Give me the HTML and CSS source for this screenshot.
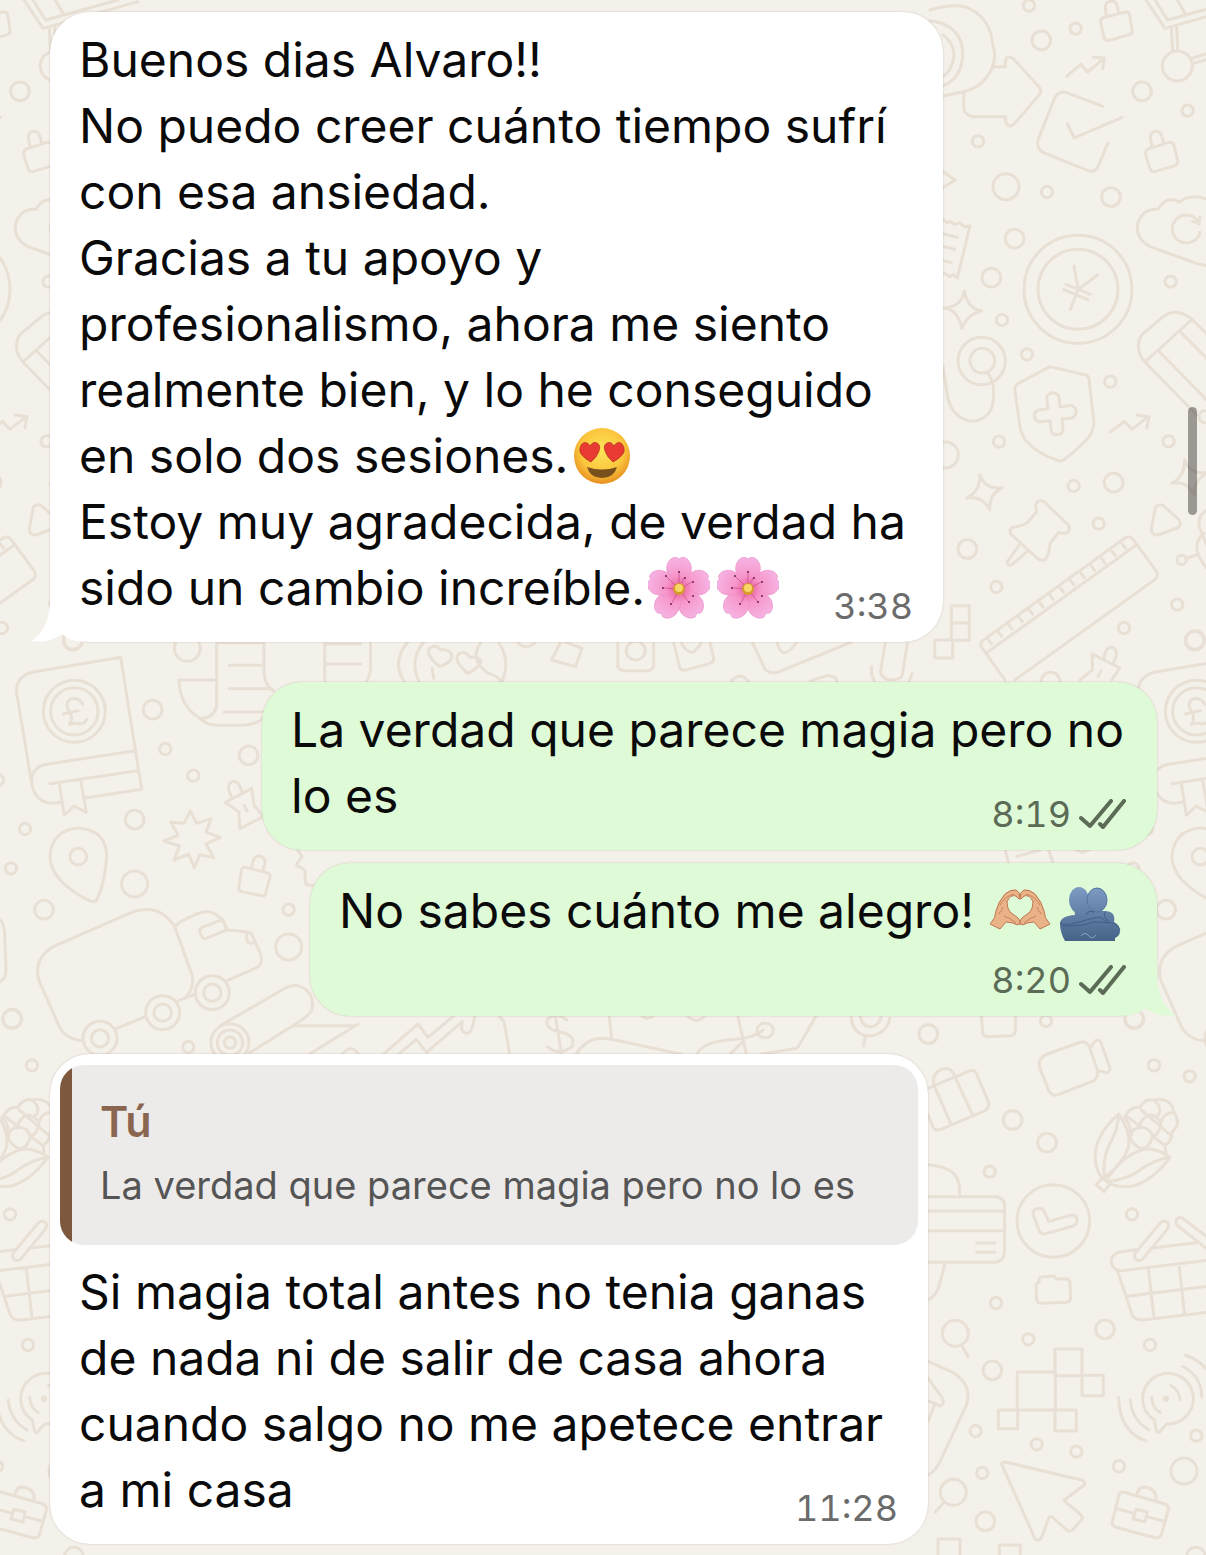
FILE: index.html
```
<!DOCTYPE html>
<html lang="es">

<head>
  <meta charset="UTF-8">
  <meta name="viewport" content="width=device-width, initial-scale=1.0">
  <title>Chat</title>
  <link rel="stylesheet" href="styles.css">
</head>

<body>
  <!-- Wallpaper: one set of doodles, repeated sideways every 1122px -->
  <svg class="wallpaper" aria-hidden="true">
    <g id="doodles">
      <g transform="translate(930 0) scale(.3333)">
        <circle cx="297" cy="17" r="17" /><circle cx="437" cy="86" r="17" /><circle cx="334" cy="121" r="28" />
        <circle cx="636" cy="274" r="28" /><circle cx="773" cy="332" r="17" /><circle cx="144" cy="424" r="17" />
        <circle cx="228" cy="560" r="39" /><circle cx="351" cy="576" r="17" /><circle cx="543" cy="591" r="28" />
        <circle cx="254" cy="716" r="28" /><circle cx="184" cy="833" r="28" /><circle cx="722" cy="845" r="17" />
        <circle cx="216" cy="960" r="17" />
        <!-- padlocks -->
        <path d="M522 52L586 36Q596 34 599 44L606 90Q608 100 598 104L538 121Q526 124 522 112L512 68Q510 55 522 52ZM529 50L526 22Q526 4 545 4Q560 4 562 20L566 40" />
        <path d="M657 446L717 427Q728 425 732 436L743 483Q744 494 735 497L674 515Q664 516 660 506L647 464Q646 450 657 446ZM666 442L661 412Q663 394 680 394Q693 396 696 410L701 430" />
        <!-- cart -->
        <path d="M648 0L705 85L990 5M675 0L713 60L930 0M742 0L765 40M724 83L728 153M740 80L743 152M785 175L828 162M788 191L828 179" />
        <circle cx="742" cy="198" r="45" />
        <!-- camera and arrow -->
        <path d="M0 30Q70 10 110 22Q165 45 182 100L194 160Q196 210 155 248Q135 268 100 275L40 288M0 62Q100 75 98 165Q95 235 40 257M40 105Q72 130 72 165Q70 205 40 230" />
        <path d="M190 200L226 200L226 182Q232 164 250 176L328 262Q336 274 328 284L252 373Q234 386 227 366L227 350L130 350Q101 346 101 318L101 277" />
        <path d="M410 229L452 193L473 216L522 175M490 172L523 174L518 206" />
        <path d="M519 319L408 277Q384 272 374 294L324 420Q318 446 340 458L474 512Q494 518 504 500L533 431M412 371L433 414L577 352" />
        <path d="M40 515L76 540L40 562" />
        <!-- cloud -->
        <path d="M850 606Q790 575 748 606Q710 585 684 628Q640 625 624 668Q614 715 660 740L800 790Q815 795 850 800M810 697A42 42 0 1 1 803 662M810 652L807 671L788 664" />
        <!-- receipt, star -->
        <path d="M40 660L52 668L62 664L74 674L88 668L103 680L120 678L82 834L70 824L60 830L40 818M40 702L82 712M40 740L74 748M40 782L64 788" />
        <path d="M103 873Q112 925 155 933Q115 940 95 985Q85 930 43 924Q95 920 103 873Z" />
        <!-- yen coin -->
        <circle cx="444" cy="868" r="162" /><circle cx="444" cy="868" r="120" />
        <path d="M432 798L445 868L503 825M445 868L421 928M408 853L481 883M401 869L474 899" />
      </g>

      <g transform="translate(930 300) scale(.3333)">
        <circle cx="291" cy="163" r="17" /><circle cx="541" cy="245" r="17" /><circle cx="207" cy="425" r="17" />
        <circle cx="716" cy="424" r="17" /><circle cx="431" cy="558" r="17" /><circle cx="551" cy="548" r="28" />
        <circle cx="506" cy="671" r="17" /><circle cx="112" cy="747" r="28" /><circle cx="199" cy="861" r="17" />
        <circle cx="742" cy="914" r="17" /><circle cx="582" cy="984" r="17" /><circle cx="795" cy="1020" r="28" />
        <circle cx="46" cy="465" r="39" /><circle cx="155" cy="183" r="71" /><circle cx="157" cy="182" r="37" />
        <circle cx="362" cy="1145" r="28" />
        <path d="M40 200L52 290Q70 360 130 364Q200 355 190 260L186 245Q180 225 170 217" />
        <!-- shield -->
        <path d="M360 200L470 226Q477 230 477 238L491 360Q495 395 465 424Q435 455 400 481Q390 485 380 480Q330 465 290 425Q274 405 270 380L254 265Q254 258 262 252Z" />
        <path d="M350 292Q356 278 370 278Q386 280 387 292L390 321L420 316Q438 318 438 336Q436 352 424 354L396 357L399 388Q398 404 380 404Q366 404 364 392L360 362L330 365Q312 362 313 346Q314 332 326 330L354 326Z" />
        <path d="M541 396L584 364L605 388L655 350M622 345L657 350L651 383" />
        <path d="M150 524Q165 570 216 563Q175 585 180 630Q155 585 110 594Q150 575 150 524Z" />
        <path d="M764 480Q780 525 834 518Q790 540 793 585Q770 540 726 550Q764 530 764 480Z" />
        <!-- push pin -->
        <path d="M320 635Q312 602 332 602Q342 602 347 610L415 675Q422 690 412 698Q400 702 386 697L360 730Q358 765 346 778Q335 785 322 775L242 702Q236 690 248 682Q290 675 296 664ZM268 735L232 785Q232 798 246 794L294 752" />
        <!-- ruler -->
        <path d="M584 715Q600 704 612 722L680 815Q686 828 676 838L255 1140M584 715L158 1022Q148 1032 156 1044L225 1140M618 736L170 1058" />
        <path d="M174 1018l10 13m21 -35l10 13m21 -35l10 13m21 -35l10 13m21 -35l10 13m21 -35l10 13m21 -35l10 13m21 -35l10 13m21 -35l10 13m21 -35l10 13m21 -35l10 13m21 -35l10 13m21 -35l10 13m21 -35l10 13" />
        <path d="M676 622Q690 606 706 622L748 660Q756 675 742 684L684 705Q664 706 664 688Z" />
        <path d="M64 917h54v104h-54zM64 969h54M14 1020h54v54h-54z" />
        <path d="M545 1140L569 1104L487 1062L487 1110L450 1140M522 1078Q525 1040 548 1042Q570 1055 550 1088M514 1112L504 1130" />
        <!-- eraser -->
        <path d="M645 186Q618 155 628 120Q632 108 640 100L700 50Q740 20 785 57L850 122M645 186L784 60M645 186L800 345M686 153L850 320M750 95L850 195" />
        <circle cx="825" cy="350" r="18" /><circle cx="755" cy="780" r="14" />
        <path d="M840 625Q800 645 808 680L834 745M822 700Q775 740 830 804M770 775L798 765" />
      </g>

      <g transform="translate(0 630) scale(.3333)">
        <circle cx="218" cy="32" r="28" /><circle cx="562" cy="55" r="39" /><circle cx="458" cy="239" r="28" />
        <circle cx="496" cy="357" r="17" /><circle cx="580" cy="437" r="17" /><circle cx="746" cy="376" r="28" />
        <circle cx="75" cy="597" r="17" /><circle cx="404" cy="569" r="28" /><circle cx="33" cy="715" r="17" />
        <circle cx="235" cy="680" r="25" /><circle cx="404" cy="762" r="39" /><circle cx="132" cy="839" r="28" />
        <circle cx="866" cy="839" r="17" /><circle cx="866" cy="951" r="39" /><circle cx="37" cy="1166" r="28" />
        <circle cx="565" cy="1251" r="17" /><circle cx="-6" cy="450" r="17" />
        <!-- book -->
        <path d="M186 516L160 520Q105 520 95 460L50 190Q45 140 100 126L362 82L425 478L255 504M95 460Q90 410 145 402L405 362M150 461L412 422M178 461L193 556L222 528L259 547L242 450" />
        <circle cx="223" cy="244" r="93" /><circle cx="223" cy="244" r="71" />
        <path d="M248 222Q235 200 212 207Q193 220 206 240Q222 265 208 284Q225 276 240 282Q255 282 260 268M190 252L235 242" />
        <!-- map pin, burst, bell, padlock -->
        <path d="M235 594Q320 600 320 680Q315 750 295 800Q288 820 270 813Q220 790 180 750Q150 715 150 680Q155 600 235 594Z" />
        <path d="M571 543L590 580L633 566L618 607L662 622L618 642L641 683L600 674L583 713L566 673L522 690L539 648L492 633L535 616L512 577L552 580Z" />
        <path d="M676 517L755 475L762 525L790 560L720 596L716 545ZM695 500Q675 465 697 454Q715 450 726 485M733 527L741 543" />
        <path d="M735 712L800 728Q812 731 810 742L797 790Q795 799 784 797L725 785Q714 782 717 770L724 722Q727 711 735 712ZM755 714L760 690Q768 674 784 680Q797 686 795 700L789 722" />
        <path d="M893 660L906 680Q890 700 890 708Q912 715 916 725Q912 765 925 766L938 766" />
        <!-- truck -->
        <path d="M248 1232Q200 1230 178 1190L116 1050Q100 985 160 950L400 845Q480 820 524 890L578 1040Q580 1080 555 1105M348 1196L436 1160M535 1112L582 1094M680 1053L765 1015Q790 1005 783 975L755 912Q750 905 740 905L682 900Q665 855 630 846Q615 843 590 852L540 876Q528 884 524 895" />
        <path d="M605 893L668 868L680 900L615 927Q605 925 600 905Q598 897 605 893M742 908Q738 920 742 935Q750 942 762 938" />
        <circle cx="300" cy="1225" r="51" /><circle cx="300" cy="1225" r="26" />
        <circle cx="488" cy="1148" r="51" /><circle cx="488" cy="1148" r="26" />
        <circle cx="637" cy="1088" r="51" /><circle cx="637" cy="1088" r="26" />
        <!-- rolled mat -->
        <circle cx="690" cy="1238" r="57" /><circle cx="690" cy="1238" r="38" /><circle cx="690" cy="1238" r="17" />
        <path d="M663 1186L860 1072Q890 1058 920 1080Q945 1105 935 1140Q925 1160 890 1180L750 1268M885 1187L1060 1187" />
        <!-- bill -->
        <path d="M650 38L650 225Q645 265 600 265Q540 230 537 150L648 150M600 265Q620 285 650 286L730 286Q775 282 790 262M792 38L792 130Q795 165 820 182M650 38H792M688 106H790M688 176H815M672 246H790" />
        <path d="M0 870Q12 880 14 910L18 1020Q18 1045 0 1055" />
      </g>

      <g transform="translate(960 780) scale(.3333)">
        <circle cx="258" cy="723" r="17" /><circle cx="522" cy="717" r="28" />
        <path d="M64 706L68 760Q70 770 80 770L155 767Q166 764 166 752L166 706M135 208L145 246M170 230L240 210M265 208L278 246M345 208L368 217L390 208" />
      </g>

      <g transform="translate(920 1030) scale(.3333)">
        <circle cx="25" cy="12" r="28" /><circle cx="702" cy="106" r="17" /><circle cx="809" cy="139" r="17" />
        <circle cx="278" cy="270" r="28" /><circle cx="381" cy="338" r="28" /><circle cx="209" cy="425" r="17" />
        <circle cx="636" cy="553" r="17" /><circle cx="228" cy="819" r="17" /><circle cx="106" cy="910" r="39" />
        <circle cx="325" cy="928" r="17" /><circle cx="555" cy="898" r="28" /><circle cx="690" cy="945" r="17" />
        <circle cx="217" cy="1021" r="28" /><circle cx="167" cy="1203" r="17" /><circle cx="350" cy="1243" r="17" />
        <circle cx="469" cy="1265" r="17" /><circle cx="597" cy="1309" r="17" /><circle cx="792" cy="1323" r="39" />
        <circle cx="187" cy="1329" r="17" /><circle cx="100" cy="1387" r="39" /><circle cx="196" cy="1474" r="28" />
        <circle cx="829" cy="1217" r="17" /><circle cx="828" cy="1580" r="28" />
        <path d="M125 946L145 981M72 1416L46 1447" />
        <!-- video camera, suitcase -->
        <path d="M375 75L480 37Q500 32 508 50L532 120Q536 140 522 152L415 194Q395 200 386 182L358 110Q354 88 375 75ZM510 54L525 34Q535 26 543 38L569 112Q572 126 560 128L534 122" />
        <path d="M24 175L150 122Q166 120 170 132L206 218Q208 234 196 242L60 300Q45 302 38 290L24 255M92 280L45 172Q30 140 60 120Q92 105 105 140L156 252" />
        <!-- corn -->
        <path d="M596 252Q520 320 526 390Q530 430 550 447Q610 400 626 350Q632 300 596 252Q595 300 565 350Q545 400 555 447" />
        <path d="M560 450Q610 370 680 356Q720 358 750 382Q700 450 640 468Q590 475 560 455Q620 450 660 420Q700 390 750 382M546 444L528 464L552 485L570 462Z" />
        <path d="M612 264Q630 228 660 232Q675 205 700 210Q755 200 762 248Q785 280 757 305Q755 335 735 347L738 370M612 264Q628 270 632 310Q625 335 662 356Q690 355 697 318Q690 295 664 292Q632 295 632 320M664 292Q655 280 672 265Q685 250 700 258Q725 270 723 285Q715 315 697 318L735 347M664 240L757 320M700 210Q725 225 718 250Q712 262 700 258M762 248Q735 245 723 275M620 258L664 292" />
        <!-- credit card -->
        <path d="M24 500H225Q254 502 254 530V665Q252 695 225 697H24M24 543H254M24 602H254M170 639H225M170 667H225M24 404Q85 410 105 435Q122 455 118 500M75 700Q65 740 55 775Q45 800 24 810" />
        <circle cx="400" cy="573" r="109" />
        <path d="M340 545Q345 535 358 536Q370 535 374 548L386 575L450 556Q466 552 471 568Q473 582 460 588L378 611Q364 615 358 604L340 556Q338 550 340 545Z" />
        <path d="M358 753Q355 740 370 740L402 738L409 747L440 746Q450 750 450 760L452 805Q450 816 440 817L362 820Q350 818 350 806L348 765Z" />
        <!-- basket -->
        <path d="M648 659L598 666Q570 675 575 700Q580 722 605 722L870 690M692 655L828 638M592 722L637 855Q645 872 668 870L870 846M622 799L870 768M685 715L702 862M777 704L794 854" />
        <path d="M645 670L720 580Q732 566 745 580Q748 590 740 600L668 688Q655 696 646 686Q642 680 645 670M870 664L770 585Q764 570 775 563Q785 560 795 570L870 628" />
        <!-- pixels -->
        <path d="M405 957h81v80h-81zM486 1036h64v61h-64zM292 1026h114v114h-114zM235 1140h58v56h-58zM405 1140h64v63h-64zM54 1580V1527H120V1580M238 1580V1545H301V1580" />
        <path d="M24 994L100 1028Q150 1060 143 1110Q140 1130 130 1145L60 1295Q45 1325 24 1335M24 1045L68 1105Q74 1125 60 1128L24 1112M42 1128L24 1175" />
        <!-- speech bubble with waves -->
        <path d="M703 1170A76 76 0 1 1 740 1182L722 1202Q716 1212 710 1205Z" />
        <circle cx="738" cy="1106" r="5" />
        <path d="M695 1102Q698 1135 721 1148M752 1066Q778 1080 780 1110M631 1110Q635 1170 687 1200M596 1103Q598 1205 678 1233M788 1009Q845 1040 845 1100M797 976Q840 990 870 1030" />
        <!-- cursor, briefcase -->
        <path d="M245 1303Q246 1294 258 1297L485 1350Q498 1356 492 1366L432 1411L483 1455Q490 1463 484 1470L458 1500Q448 1507 440 1500L395 1460Q388 1458 386 1466L364 1524Q354 1535 345 1526Z" />
        <path d="M610 1386L735 1422Q748 1428 745 1440L725 1512Q720 1525 708 1524L588 1492Q574 1486 577 1475L597 1395Q600 1385 610 1386ZM650 1396Q655 1368 680 1372Q712 1380 708 1412M590 1436L642 1450M680 1460L732 1474M648 1438L682 1446L675 1476L639 1467Z" />
      </g>

      <!-- doodles that peek out between the bubbles -->
      <g transform="translate(180 600) scale(.4975 .3333)">
        <path d="M291 126V243M291 132H363M291 192H363M383 126V210Q380 235 375 243M458 126Q425 185 450 243M490 126Q460 180 480 243" />
        <path d="M522 200Q490 160 503 143Q515 132 525 150Q540 145 547 165Q545 190 522 200ZM578 220Q548 180 560 162Q575 150 582 172Q600 168 605 185Q600 205 578 220M605 126Q580 180 620 220Q640 230 645 243M640 126Q665 180 648 243M507 205L510 235M678 126Q695 155 715 126" />
        <path d="M765 126L747 180L795 200L808 145L775 126M880 126V200Q882 212 895 212H940Q952 210 952 195V126M992 126L1005 205Q1008 212 1020 209L1065 190Q1075 185 1072 170L1065 126M1008 130Q1028 185 1048 126" />
        <ellipse cx="916" cy="152" rx="19" ry="28" />
        <path d="M1150 126L1175 205Q1185 225 1205 215L1350 126M1200 126Q1210 190 1240 126M1418 126L1408 215Q1412 240 1430 240Q1450 238 1452 225L1462 130M1390 200Q1388 225 1396 243M1471 222L1466 243M1108 243Q1125 215 1142 243M1268 243Q1300 225 1308 228Q1320 232 1320 243" />
      </g>
      <g transform="translate(220 1000) scale(.51 .3333)">
        <path d="M270 73L175 163M320 163L388 72L408 112L460 45M350 163L385 118L405 157L475 65Q470 100 485 100Q495 98 500 45M545 45L557 65L568 163M240 163Q258 130 272 163" />
        <path d="M680 60Q660 35 642 58Q635 85 665 95Q700 105 690 140Q665 170 642 140M657 45L670 163M763 45L768 115M698 163Q715 120 745 115Q760 115 775 120L905 163M825 45Q838 65 852 45M915 45Q935 78 952 45" />
        <path d="M1015 45L1032 163M935 163Q945 125 1010 118Q1050 112 1065 90M1170 45L1132 145L1060 163M1000 163L1025 125" />
        <ellipse cx="1069" cy="91" rx="16" ry="22" />
        <path d="M1237 45Q1240 108 1275 108Q1308 100 1313 55M1255 45Q1258 80 1275 80Q1293 80 1297 45M1265 110L1262 138" />
      </g>
    </g>
    <use href="#doodles" x="-1122" />
    <use href="#doodles" x="1122" />
  </svg>

  <!-- shared shapes -->
  <svg class="defs" aria-hidden="true">
    <defs>
      <radialGradient id="face" cx=".5" cy=".4" r=".6">
        <stop offset="0" stop-color="#fde35a" />
        <stop offset=".65" stop-color="#fbc63d" />
        <stop offset="1" stop-color="#e78f20" />
      </radialGradient>
      <radialGradient id="petal" cx="31" cy="31" r="31" gradientUnits="userSpaceOnUse">
        <stop offset="0" stop-color="#e9579b" />
        <stop offset=".4" stop-color="#f796c9" />
        <stop offset="1" stop-color="#f5b4e4" />
      </radialGradient>
      <linearGradient id="hug" x1="0" y1="3" x2="0" y2="57" gradientUnits="userSpaceOnUse">
        <stop offset="0" stop-color="#7d9cc3" />
        <stop offset="1" stop-color="#466288" />
      </linearGradient>
      <symbol id="flower" viewBox="0 0 62 62">
        <g fill="url(#petal)" stroke="#ec8cc6" stroke-width=".6">
          <path id="leaf" d="M31 32C24 28 17 17 19 8Q22 0 28 0L31 2L34 0Q40 0 43 8C45 17 38 28 31 32Z" />
          <use href="#leaf" transform="rotate(72 31 32)" />
          <use href="#leaf" transform="rotate(144 31 32)" />
          <use href="#leaf" transform="rotate(216 31 32)" />
          <use href="#leaf" transform="rotate(288 31 32)" />
        </g>
        <path d="M31 32V16M31 32L18 19M31 32L44 25M31 32L16 31M31 32L24 46M31 32L40 44M31 32L36 21" stroke="#b9407d" stroke-width=".6" />
        <g fill="#6c2143">
          <circle cx="31" cy="15" r="1" /><circle cx="18" cy="19" r="1" /><circle cx="45" cy="25" r="1" />
          <circle cx="15" cy="31" r="1" /><circle cx="23" cy="47" r="1" /><circle cx="41" cy="45" r="1" />
          <circle cx="37" cy="21" r="1" /><circle cx="45" cy="39" r="1" />
        </g>
        <circle cx="31" cy="32" r="6" fill="#d69a2c" />
        <circle cx="31" cy="31" r="4" fill="#f9d766" />
      </symbol>
      <symbol id="ticks" viewBox="0 0 48 30">
        <path d="M2 19L11 27L32 2M21 25L24 28L45 2" fill="none" stroke="currentColor" stroke-width="4" stroke-linecap="round" stroke-linejoin="round" />
      </symbol>
    </defs>
  </svg>

  <main class="chat">
    <article class="bubble in first">
      <svg class="tail" viewBox="0 0 54 60" aria-hidden="true">
        <path d="M19 0V20Q18 48 0 59Q18 62 31 52Q40 60 54 60L30 40L20 0Z" />
      </svg>
      <p>Buenos dias Alvaro!!<br>
        No puedo creer cuánto tiempo sufrí<br>
        con esa ansiedad.<br>
        Gracias a tu apoyo y<br>
        profesionalismo, ahora me siento<br>
        realmente bien, y lo he conseguido<br>
        en solo dos sesiones.<svg class="emoji" viewBox="0 0 62 62" role="img" aria-label="cara con ojos de corazón">
          <circle cx="31" cy="31" r="28" fill="url(#face)" />
          <path id="eye" d="M20 37Q7 30 9 23Q11 16 16 18Q18 19 19 21Q22 16 26 18Q30 20 28 26Q26 32 20 37Z" fill="#e93b33" stroke="#b5371c" stroke-width=".8" />
          <use href="#eye" transform="matrix(-1 0 0 1 62 0)" />
          <path d="M16 42Q31 47 46 42Q43 53 31 53Q19 53 16 42Z" fill="#78501c" />
        </svg><br>
        Estoy muy agradecida, de verdad ha<br>
        sido un cambio increíble.<svg class="emoji" role="img" aria-label="flor de cerezo"><use href="#flower" /></svg><svg class="emoji next" role="img" aria-label="flor de cerezo"><use href="#flower" /></svg></p>
      <footer><time>3:38</time></footer>
    </article>

    <article class="bubble out">
      <p>La verdad que parece magia pero no<br>
        lo es</p>
      <footer><time>8:19</time><svg class="ticks" role="img" aria-label="entregado"><use href="#ticks" /></svg></footer>
    </article>

    <article class="bubble out short">
      <svg class="tail" viewBox="0 0 54 60" aria-hidden="true">
        <path d="M35 0V20Q36 48 54 59Q36 62 23 52Q14 60 0 60L24 40L34 0Z" />
      </svg>
      <p>No sabes cuánto me alegro! <svg class="emoji" viewBox="0 -10 62 62" role="img" aria-label="manos formando un corazón">
          <g id="hand">
            <path d="M0 34Q6 28 6 21Q8 12 15 4Q21 -1 26 0Q30 2 30 7V9Q28 9 26 6Q20 4 17 12Q17 18 20 22L28 28Q31 31 30 34Q27 36 23 33L16 32L10 39Z" fill="#eab287" stroke="#bd7550" stroke-width="1" stroke-linejoin="round" />
            <path d="M10 15Q14 7 24 4M8 24Q12 22 13 17M14 26Q20 28 26 33" fill="none" stroke="#c98560" stroke-width="1" />
          </g>
          <use href="#hand" transform="matrix(-1 0 0 1 60 0)" />
        </svg><svg class="emoji next" viewBox="0 -4 62 62" role="img" aria-label="abrazo">
          <g fill="url(#hug)">
            <path d="M15 24L16 31Q1 32 1 40Q1 48 6 57H56V54Q61 52 61 47Q61 41 55 38Q57 28 47 27H36L29 22Z" />
            <ellipse cx="20" cy="16" rx="10" ry="13" />
            <ellipse cx="38" cy="16" rx="10" ry="12" stroke="#54749f" stroke-width="1" />
          </g>
          <path d="M1 39Q8 43 20 38Q30 35 40 33Q44 34 48 38M27 31Q29 26 35 28M2 42Q22 43 34 38Q44 38 54 39Q60 42 61 46M46 28Q44 34 50 37" fill="none" stroke="#3f5e8a" stroke-width="1" />
          <path d="M22 52Q26 47 30 52Q34 56 37 51" fill="none" stroke="#88a4cb" stroke-width="1" />
        </svg></p>
      <footer class="below"><time>8:20</time><svg class="ticks" role="img" aria-label="entregado"><use href="#ticks" /></svg></footer>
    </article>

    <article class="bubble in reply">
      <blockquote>
        <cite>Tú</cite>
        <span>La verdad que parece magia pero no lo es</span>
      </blockquote>
      <p>Si magia total antes no tenia ganas<br>
        de nada ni de salir de casa ahora<br>
        cuando salgo no me apetece entrar<br>
        a mi casa</p>
      <footer><time>11:28</time></footer>
    </article>
  </main>

  <div class="scrollbar"></div>
</body>

</html>
```
FILE: styles.css
```
* {
  box-sizing: border-box;
}

body {
  position: relative;
  margin: 0;
  background: #f4f1ea;
  color: #0a0a0a;
  font-family: Inter, "Liberation Sans", sans-serif;
  overflow-x: hidden;
}

.wallpaper {
  position: absolute;
  inset: 0;
  width: 100%;
  height: 100%;
  fill: none;
  stroke: #e8dfd5;
  stroke-width: 3;
  stroke-linecap: round;
  stroke-linejoin: round;
}

.wallpaper path,
.wallpaper circle,
.wallpaper ellipse {
  vector-effect: non-scaling-stroke;
}

.defs {
  position: absolute;
  width: 0;
  height: 0;
}

.chat {
  position: relative;
  display: flex;
  flex-direction: column;
  padding: 12px 49px 11px 50px;
}

.bubble {
  position: relative;
  max-width: 100%;
  padding: 15px 30px 16px 29px;
  border-radius: 40px;
  box-shadow: 0 0 2px rgba(80, 60, 40, .25);
}

.in {
  align-self: flex-start;
  width: 893px;
  background: #fff;
}

.out {
  align-self: flex-end;
  width: 895px;
  margin-top: 40px;
  background: #defad6;
}

.short {
  width: 847px;
  margin-top: 13px;
}

.reply {
  width: 878px;
  margin-top: 38px;
  padding-top: 11px;
}

.bubble p {
  margin: 0;
  font-size: 48px;
  line-height: 66px;
  white-space: nowrap;
}

.bubble footer {
  display: flex;
  justify-content: flex-end;
  align-items: center;
  gap: 8px;
  height: 40px;
  margin-top: -35px;
  color: #6b6b6b;
  font-size: 36px;
  font-variant-numeric: tabular-nums;
  line-height: 40px;
}

.out footer {
  color: #5b6b56;
}

.bubble .below {
  margin-top: 16px;
}

.ticks {
  width: 48px;
  height: 30px;
}

.emoji {
  width: 62px;
  height: 62px;
  margin: -8px 0 0 3px;
  vertical-align: middle;
}

.next {
  margin-left: 7px;
}

.tail {
  position: absolute;
  bottom: 0;
  width: 54px;
  height: 60px;
}

.in .tail {
  left: -19px;
  fill: #fff;
}

.out .tail {
  right: -19px;
  fill: #defad6;
}

.reply blockquote {
  display: flex;
  flex-direction: column;
  height: 180px;
  margin: 0 -20px 14px -19px;
  padding: 28px 28px 28px 40px;
  border-radius: 24px;
  background: linear-gradient(to right, #7e573f 12px, #edebea 12px);
}

.reply cite {
  color: #8a6650;
  font-size: 43px;
  font-style: normal;
  font-weight: 600;
  line-height: 56px;
}

.reply span {
  margin-top: 8px;
  color: #555;
  font-size: 38px;
  line-height: 56px;
  white-space: nowrap;
}

.scrollbar {
  position: absolute;
  top: 407px;
  right: 9px;
  width: 9px;
  height: 108px;
  border-radius: 5px;
  background: rgba(60, 56, 54, .48);
}
```
